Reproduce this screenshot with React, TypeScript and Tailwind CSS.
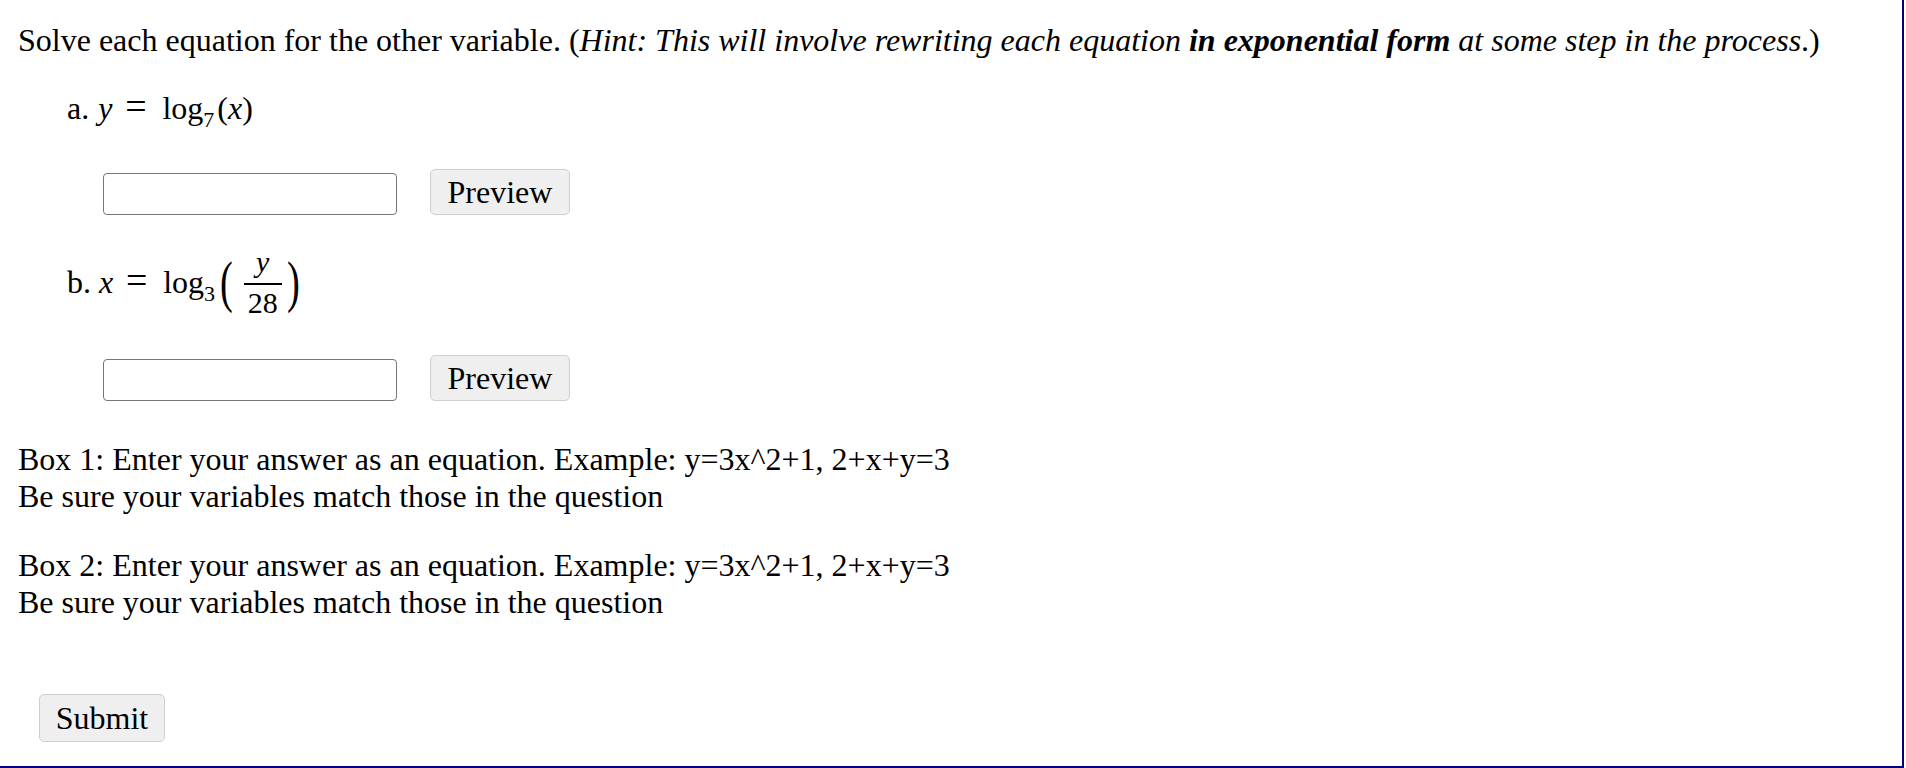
import React from "react";

const Field = () => (
  <div className="flex items-end gap-[33px] ml-[85px]">
    <input
      type="text"
      className="w-[294px] h-[42px] border border-[#767676] rounded-[4px] bg-white outline-none"
    />
    <button className="w-[140px] h-[46px] bg-[#efefef] border border-[#cfcfcf] rounded-[5px] text-[32px] leading-none">
      Preview
    </button>
  </div>
);

const Eq = () => (
  <span className="inline-block w-[25px] ml-[11px] mr-[14px] text-center text-[38px] leading-[30px]">=</span>
);

export default function App() {
  return (
    <div className="w-[1904px] h-[768px] bg-white border-r-2 border-b-2 border-[#000080] font-['Liberation_Serif',serif] text-[32px] leading-[37px] text-black">
      <div className="pt-[22px] pl-[18px]">
        <p>
          Solve each equation for the other variable. (
          <i>
            Hint: This will involve rewriting each equation <b>in exponential form</b> at some step in the process
          </i>
          .)
        </p>

        {/* part a */}
        <div className="mt-[31px] ml-[49px] whitespace-nowrap">
          a.<i className="ml-[9px]">y</i>
          <Eq />
          log
          <span className="relative top-[8px] text-[22px] leading-none">7</span>
          <span className="ml-[3px]">(</span>
          <i>x</i>)
        </div>

        <div className="mt-[42px]">
          <Field />
        </div>

        {/* part b */}
        <div className="mt-[32px] ml-[49px] whitespace-nowrap">
          b.<i className="ml-[8px]">x</i>
          <Eq />
          log
          <span className="relative top-[8px] text-[22px] leading-none">3</span>
          <span className="inline-block ml-[6px] scale-y-[1.75] scale-x-[1.2] leading-none">(</span>
          <span className="inline-flex flex-col items-center ml-[12px] align-[21px] text-[30px]">
            <i className="leading-[30px]">y</i>
            <span className="mt-[6px] w-[38px] h-[2px] bg-black" />
            <span className="mt-[4px] leading-[28px]">28</span>
          </span>
          <span className="inline-block ml-[6px] scale-y-[1.75] scale-x-[1.2] leading-none">)</span>
        </div>

        <div className="mt-[38px]">
          <Field />
        </div>

        <div className="mt-[40px]">
          <p>Box 1: Enter your answer as an equation. Example: y=3x^2+1, 2+x+y=3</p>
          <p>Be sure your variables match those in the question</p>
          <p className="mt-[32px]">Box 2: Enter your answer as an equation. Example: y=3x^2+1, 2+x+y=3</p>
          <p>Be sure your variables match those in the question</p>
        </div>

        <button className="mt-[73px] ml-[21px] w-[126px] h-[48px] bg-[#efefef] border border-[#cfcfcf] rounded-[5px] text-[32px] leading-none">
          Submit
        </button>
      </div>
    </div>
  );
}
